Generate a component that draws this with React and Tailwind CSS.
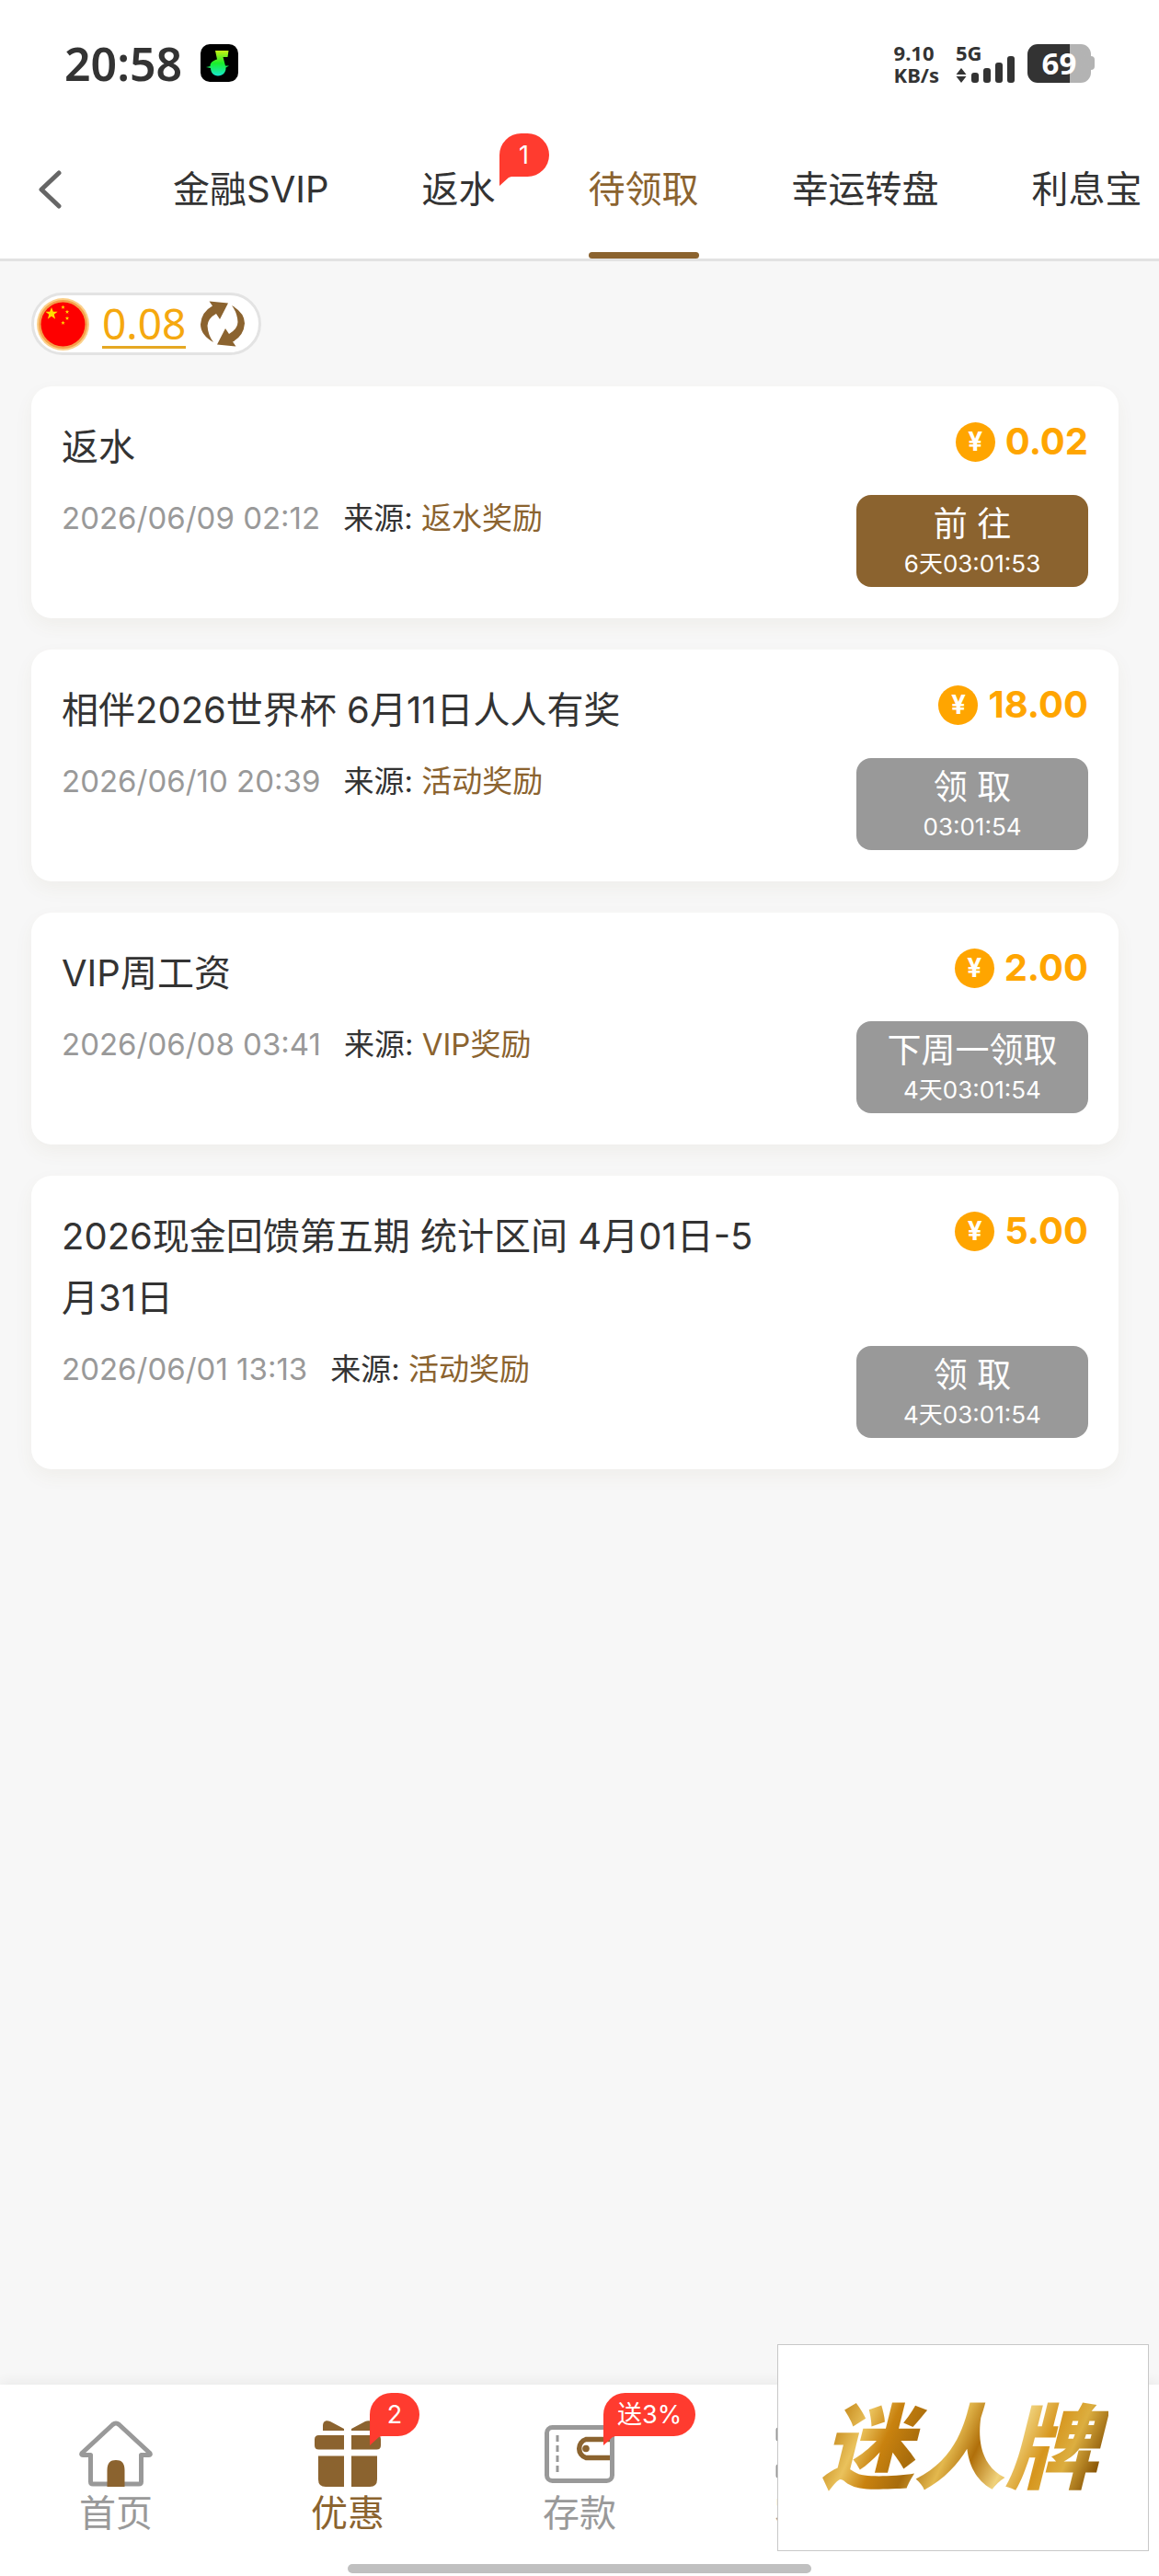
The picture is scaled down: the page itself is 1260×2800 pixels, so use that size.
const TABS = [
  { label: '金融SVIP' },
  { label: '返水', badge: '1' },
  { label: '待领取', active: true },
  { label: '幸运转盘' },
  { label: '利息宝' },
]

const REWARDS = [
  { title: '返水', date: '2026/06/09 02:12', source: '返水奖励', amount: '0.02', action: '前 往', left: '6天03:01:53', ready: true },
  { title: '相伴2026世界杯 6月11日人人有奖', date: '2026/06/10 20:39', source: '活动奖励', amount: '18.00', action: '领 取', left: '03:01:54' },
  { title: 'VIP周工资', date: '2026/06/08 03:41', source: 'VIP奖励', amount: '2.00', action: '下周一领取', left: '4天03:01:54' },
  { title: '2026现金回馈第五期 统计区间 4月01日-5月31日', date: '2026/06/01 13:13', source: '活动奖励', amount: '5.00', action: '领 取', left: '4天03:01:54' },
]

const NAV = [
  { label: '首页', icon: HomeIcon },
  { label: '优惠', icon: GiftIcon, badge: '2', active: true },
  { label: '存款', icon: WalletIcon, badge: '送3%' },
  { label: '客服', icon: ServiceIcon },
]

function HomeIcon() {
  return (
    <svg width="80" height="72" viewBox="0 0 80 72" fill="none" aria-hidden="true">
      <path d="M36.500 4.500Q40 1.500 43.500 4.500L77 35.500Q78 37.500 76 37.500H67.500V66.500Q67.500 69 65 69H15Q12.500 69 12.500 66.500V37.500H4Q2 37.500 3 35.500Z" stroke="#999" strokeWidth="5" strokeLinejoin="round" />
      <path d="M30.500 72V54C30.500 46 34 43 40 43s9.500 3 9.500 11v18z" fill="#8b632f" />
    </svg>
  )
}

function GiftIcon() {
  return (
    <svg width="72" height="72" viewBox="0 0 72 72" fill="#8b632f" aria-hidden="true">
      <path d="M9 11V6c0-5 3-7 8-5l15 8v2zM63 11V6c0-5-3-7-8-5L40 9v2z" />
      <path d="M32 16v15.500H4.500Q0 31.500 0 27v-6.500Q0 16 4.500 16zM40 16v15.500h27.500q4.500 0 4.500-4.500v-6.500q0-4.500-4.500-4.500z" />
      <path d="M4 38.500h28V72H12q-8 0-8-8zM68 38.500H40V72h20q8 0 8-8z" />
    </svg>
  )
}

function WalletIcon() {
  return (
    <svg width="76" height="72" viewBox="0 0 76 72" fill="none" aria-hidden="true">
      <path d="M71 20.500H45a10.500 10.500 0 0 0 0 20H71" stroke="#8b632f" strokeWidth="5.500" />
      <circle cx="45" cy="30.500" r="3.800" fill="#8b632f" />
      <rect x="2.500" y="7.500" width="71" height="58" rx="6" stroke="#999" strokeWidth="5" />
      <path d="M14 16v7M14 27v7M14 38v7M14 49v7" stroke="#999" strokeWidth="3" />
    </svg>
  )
}

function ServiceIcon() {
  return (
    <svg width="80" height="72" viewBox="0 0 80 72" fill="none" stroke="#999" strokeWidth="5" strokeLinecap="round" aria-hidden="true">
      <path d="M4 10v10M4 50v10M14 34C14 12 66 12 66 34v16C66 64 52 68 42 68" />
    </svg>
  )
}

function RefreshIcon() {
  const arrow = 'M14 45Q0 37 0 25.500Q1 12 13 5.500L9.500 .5L30 2.500L21 20L17 14Q8 19 7.500 27Q8 37 14 45Z'
  return (
    <svg width="48" height="50" viewBox="0 0 48 50" fill="#8b632f" aria-hidden="true">
      <path d={arrow} />
      <path d={arrow} transform="rotate(180 24 25)" />
    </svg>
  )
}

function FlagIcon() {
  const star = 'M0-1L.26-.33L.95-.31L.4.12L.59.81L0 .41L-.59.81L-.4.12L-.95-.31L-.26-.33Z'
  return (
    <svg width="57" height="57" viewBox="0 0 57 57" aria-hidden="true">
      <circle cx="28.500" cy="28.500" r="28.500" fill="#fbd08a" />
      <circle cx="28.500" cy="28.500" r="26.500" fill="#f5a04a" />
      <circle cx="28.500" cy="28.500" r="24" fill="#fe0000" />
      <g fill="#ffde00">
        <path d={star} transform="translate(16 17) scale(7)" />
        <path d={star} transform="translate(28.500 10) scale(2.300)" />
        <path d={star} transform="translate(33 15) scale(2.300)" />
        <path d={star} transform="translate(33 22) scale(2.300)" />
        <path d={star} transform="translate(28.500 27) scale(2.300)" />
      </g>
    </svg>
  )
}

// Globo rojo con la punta abajo a la izquierda
function Badge({ children, className }) {
  return (
    <span className={`absolute flex items-center justify-center h-[47px] min-w-[54px] px-[15px] rounded-[24px] rounded-bl-none bg-[#ff3b2f] text-white text-[27px] leading-none whitespace-nowrap ${className}`}>
      {children}
      <svg className="absolute left-0 top-full" width="13" height="10" viewBox="0 0 13 10" fill="#ff3b2f" aria-hidden="true">
        <path d="M0 0h13L10 1L0 10z" />
      </svg>
    </span>
  )
}

function StatusBar() {
  return (
    <div className="flex items-center justify-between h-[137px] px-[70px] text-[#333] font-['Noto_Sans',sans-serif]">
      <div className="flex items-center gap-5">
        <span className="text-[50px] leading-[50px] font-semibold">20:58</span>
        <svg width="41" height="41" viewBox="0 0 41 41" aria-hidden="true">
          <defs>
            <linearGradient id="note" x1="0" y1="0" x2="0" y2="1">
              <stop offset="0" stopColor="#c8f014" />
              <stop offset=".5" stopColor="#19ee2c" />
              <stop offset="1" stopColor="#18e8d0" />
            </linearGradient>
          </defs>
          <rect width="41" height="41" rx="10" fill="#000" />
          <path d="M16 7h14.500l-1 7h-5l2.500 9.500h4l-3.500 2c.5 5-3.500 9-8.500 9s-8-4-8-8.500L6 25l4.500-1c0-4 3-6 7.500-7.500z" fill="url(#note)" />
        </svg>
      </div>
      <div className="flex items-center">
        <div className="flex flex-col font-bold text-[22px] leading-[24px]">
          <span>9.10</span>
          <span>KB/s</span>
        </div>
        <div className="relative w-[66px] h-[42px] ml-[18px]">
          <svg className="absolute inset-0" width="66" height="42" viewBox="0 0 66 42" fill="#333" aria-hidden="true">
            <path d="M6 26l5.500 7H.5zM6 42l5.500-7H.5z" />
            <rect x="17" y="31" width="8" height="11" rx="3" />
            <rect x="30" y="26" width="8" height="16" rx="3" />
            <rect x="43" y="20" width="8" height="22" rx="3" />
            <rect x="56" y="13" width="8" height="29" rx="3" />
          </svg>
          <span className="block text-[22px] leading-[18px] font-bold">5G</span>
        </div>
        <div className="flex items-center ml-[12px]">
          <div className="flex items-center justify-center w-[69px] h-[42px] rounded-[11px] bg-linear-to-r from-[#333] from-67% to-[#b3b3b3] to-67% text-white text-[33px] leading-none font-bold">
            69
          </div>
          <span className="w-1 h-[15px] rounded-r-sm bg-[#b3b3b3]" />
        </div>
      </div>
    </div>
  )
}

function TabBar() {
  return (
    <nav className="flex items-start border-b-[3px] border-[#e2e2e2] overflow-hidden" aria-label="分类">
      <button type="button" aria-label="返回" className="flex items-center h-[137px] pl-10 w-[188px] shrink-0">
        <svg width="28" height="42" viewBox="0 0 28 42" fill="none" stroke="#666" strokeWidth="5" strokeLinecap="round" strokeLinejoin="round" aria-hidden="true">
          <path d="M24 3L5 21l19 18" />
        </svg>
      </button>
      <div className="flex gap-[101px]">
        {TABS.map((t) => (
          <button
            key={t.label}
            type="button"
            className={`relative shrink-0 text-[40px] leading-[137px] whitespace-nowrap ${t.active ? 'text-[#8b632f]' : ''}`}
          >
            {t.label}
            <span className={`block h-[7px] rounded-full ${t.active ? 'bg-[#8b632f]' : ''}`} />
            {t.badge && <Badge className="left-full top-2 ml-1">{t.badge}</Badge>}
          </button>
        ))}
      </div>
    </nav>
  )
}

function RewardCard({ title, date, source, amount, action, left, ready }) {
  return (
    <article className="flex flex-col gap-[19px] px-[33px] pt-8 pb-[34px] rounded-[22px] bg-white shadow-[0_8px_20px_rgba(120,100,50,0.06)]">
      <div className="flex items-start justify-between">
        <h2 className="text-[40px] leading-[67px] max-w-[770px]">{title}</h2>
        <p className="flex items-center gap-[11px] h-[56px] text-[#ffa500] text-[40px] leading-none font-bold">
          <span className="flex items-center justify-center size-[43px] rounded-full bg-[#ffa500] text-white text-[28px] leading-none">¥</span>
          {amount}
        </p>
      </div>
      <div className="flex items-start justify-between">
        <p className="flex gap-[25px] text-[33px] leading-[50px]">
          <time className="text-[#999]">{date}</time>
          <span>
            来源: <span className="text-[#8b632f]">{source}</span>
          </span>
        </p>
        <button
          type="button"
          className={`flex flex-col items-center justify-center w-[252px] h-[100px] pt-1.5 rounded-[16px] text-white leading-[43px] ${ready ? 'bg-[#8b632f]' : 'bg-[#999]'}`}
        >
          <span className="text-[37px]">{action}</span>
          <span className="text-[26px]">{left}</span>
        </button>
      </div>
    </article>
  )
}

function BottomNav() {
  return (
    <nav className="relative mt-auto grid grid-cols-5 h-[208px] pt-[39px] bg-white shadow-[0_-4px_12px_rgba(0,0,0,0.05)]" aria-label="主导航">
      {NAV.map(({ label, icon: Icon, badge, active }) => (
        <a
          key={label}
          href="#"
          className={`flex flex-col items-center gap-[5px] text-[40px] leading-[48px] ${active ? 'text-[#8b632f]' : 'text-[#999]'}`}
        >
          <span className="relative">
            <Icon />
            {badge && <Badge className="left-full top-[-30px] ml-[-12px]">{badge}</Badge>}
          </span>
          {label}
        </a>
      ))}
      <span className="absolute bottom-[3px] left-[30%] w-[40%] h-[10px] rounded-full bg-[#c0c0c0]" />
    </nav>
  )
}

export default function App() {
  return (
    <div className="flex flex-col min-h-screen bg-[#f7f7f7] text-[#333] font-['Inter','Noto_Sans_CJK_SC',sans-serif]">
      <header className="bg-white">
        <StatusBar />
        <TabBar />
      </header>
      <main className="flex flex-col gap-[34px] pt-[34px] pb-[34px] pl-[34px] pr-[44px]">
        <div className="flex items-center self-start h-[68px] pl-[3px] pr-[15px] rounded-full border-[3px] border-[#e3e3e3] bg-white">
          <FlagIcon />
          <a href="#" className="ml-[14px] mr-4 border-b-[3px] border-[#e5a823] text-[#f5a80f] text-[46px] leading-[50px] font-['Noto_Sans',sans-serif]">
            0.08
          </a>
          <button type="button" aria-label="刷新">
            <RefreshIcon />
          </button>
        </div>
        {REWARDS.map((r) => (
          <RewardCard key={r.title} {...r} />
        ))}
      </main>
      <BottomNav />
      {/* Sello flotante */}
      <aside className="fixed right-[11px] bottom-[27px] flex items-center justify-center w-[404px] h-[225px] border border-[#c8c8c8] bg-white">
        <span className="pl-1 pr-3 text-[100px] leading-[120px] font-black italic text-transparent bg-clip-text bg-[linear-gradient(115deg,#a86a0c_0%,#c98f22_10%,#eac25c_18%,#c9820f_26%,#a86c0c_36%,#e3b84e_46%,#b06f0a_54%,#f0d27c_64%,#d6951d_74%,#dcae40_82%,#8a5606_92%,#c08a24_100%)]">
          迷人牌
        </span>
      </aside>
    </div>
  )
}
